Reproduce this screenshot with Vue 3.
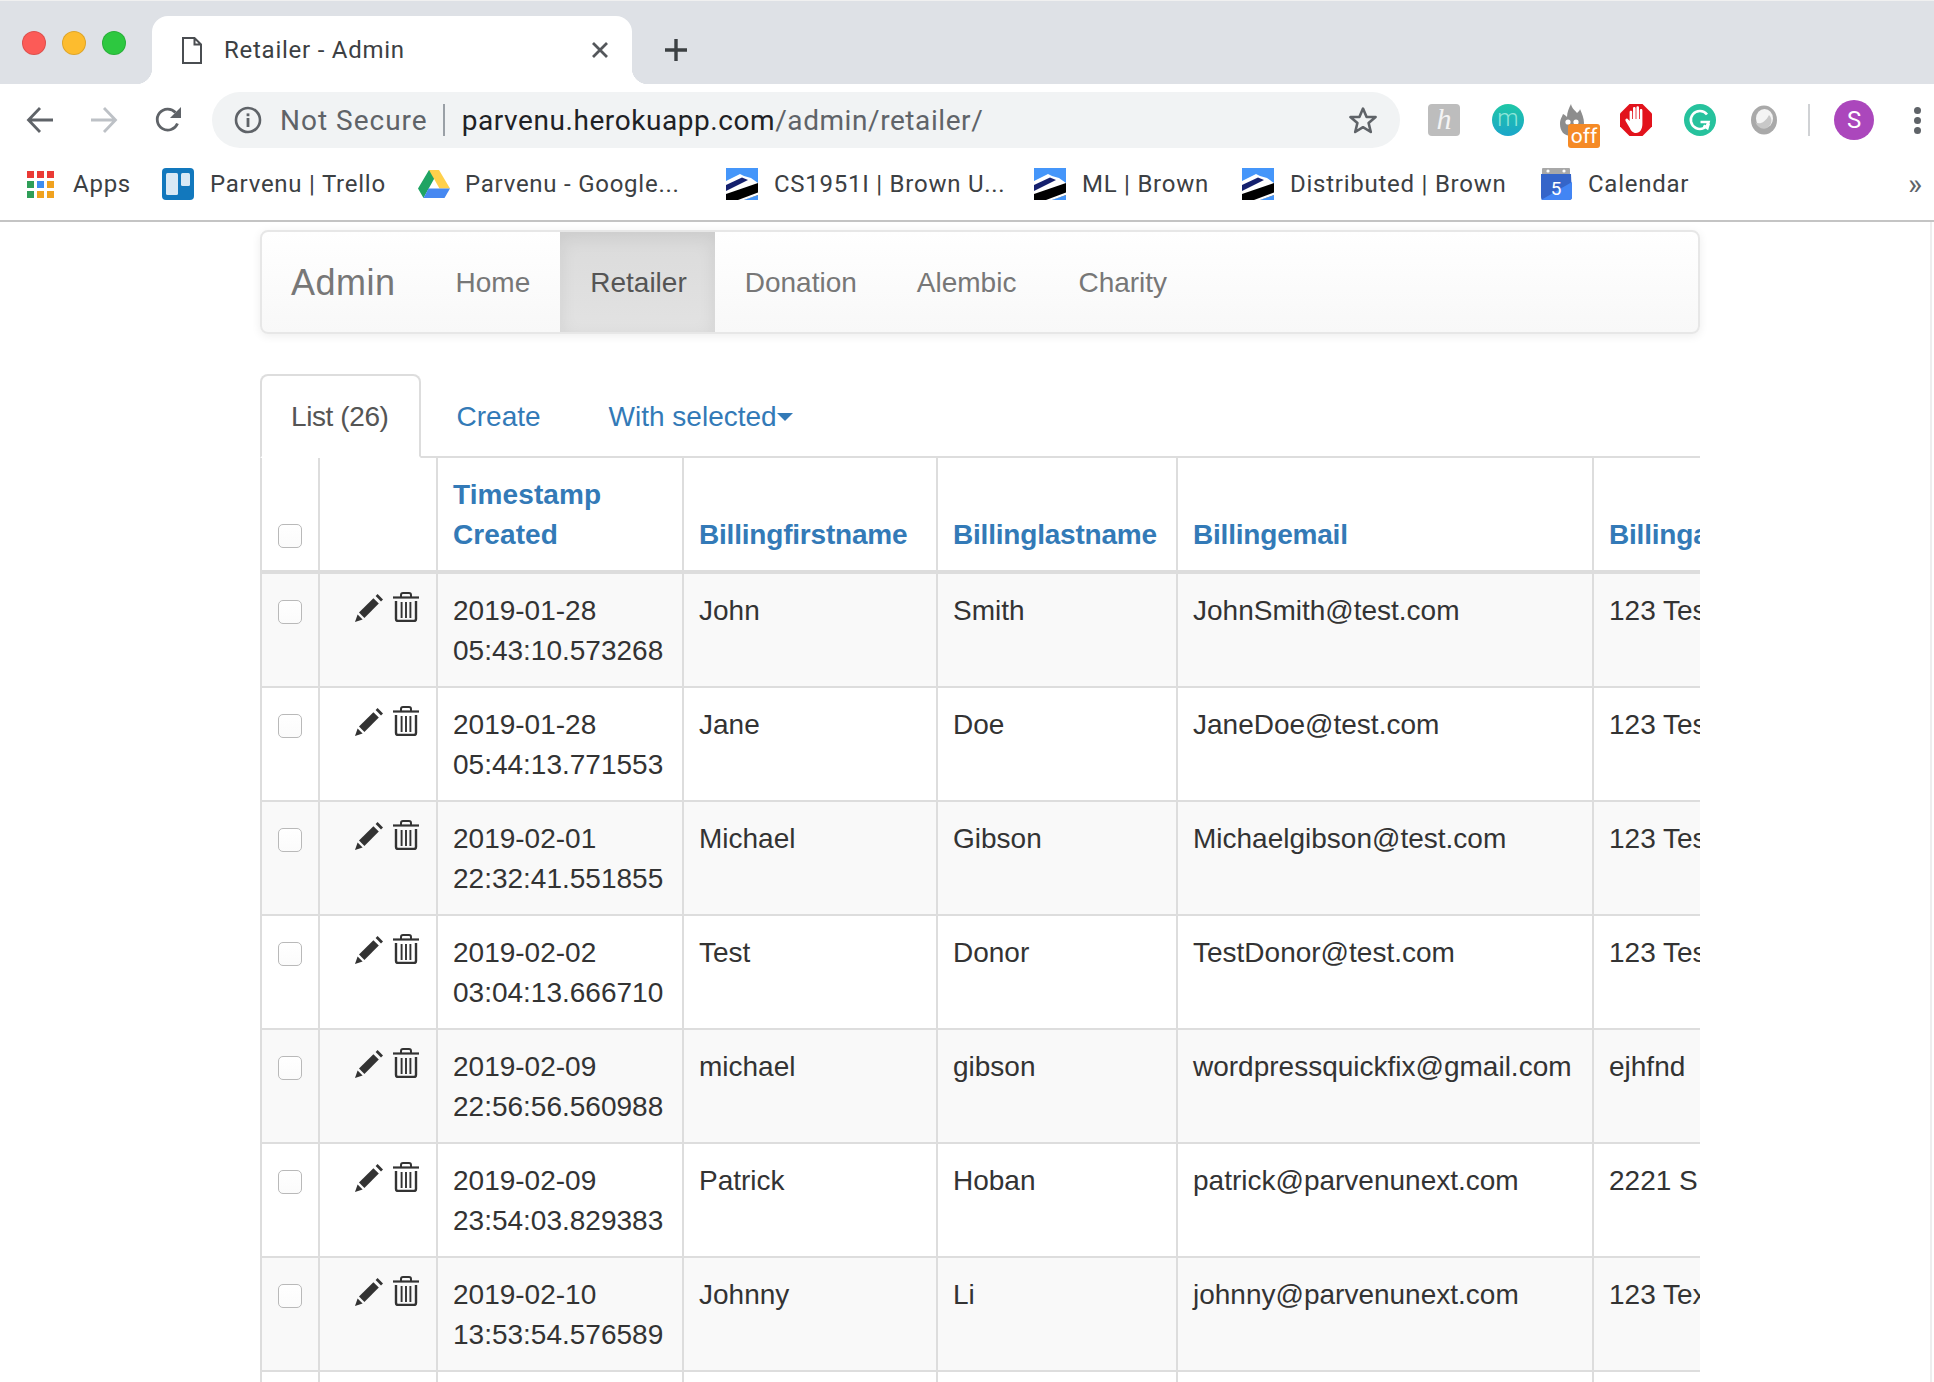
<script setup>
const bookmarks = [
  { label: 'Apps', icon: 'apps', width: 136 },
  { label: 'Parvenu | Trello', icon: 'trello', width: 257 },
  { label: 'Parvenu - Google...', icon: 'drive', width: 307 },
  { label: 'CS1951I | Brown U...', icon: 'brown', width: 308 },
  { label: 'ML | Brown', icon: 'brown', width: 208 },
  { label: 'Distributed | Brown', icon: 'brown', width: 298 },
  { label: 'Calendar', icon: 'calendar', width: 160 }
]

const appColors = ['#ea3a35', '#ea3a35', '#ea3a35', '#2f9e58', '#3f8df0', '#f0a21f', '#2f9e58', '#f0a21f', '#f0a21f']

const navLinks = ['Home', 'Retailer', 'Donation', 'Alembic', 'Charity']

const rows = [
  ['2019-01-28', '05:43:10.573268', 'John', 'Smith', 'JohnSmith@test.com', '123 Test St'],
  ['2019-01-28', '05:44:13.771553', 'Jane', 'Doe', 'JaneDoe@test.com', '123 Test St'],
  ['2019-02-01', '22:32:41.551855', 'Michael', 'Gibson', 'Michaelgibson@test.com', '123 Test St'],
  ['2019-02-02', '03:04:13.666710', 'Test', 'Donor', 'TestDonor@test.com', '123 Test St'],
  ['2019-02-09', '22:56:56.560988', 'michael', 'gibson', 'wordpressquickfix@gmail.com', 'ejhfnd'],
  ['2019-02-09', '23:54:03.829383', 'Patrick', 'Hoban', 'patrick@parvenunext.com', '2221 S Main St'],
  ['2019-02-10', '13:53:54.576589', 'Johnny', 'Li', 'johnny@parvenunext.com', '123 Texas Ave']
]
</script>

<template>
  <div class="page">
    <header class="chrome">
      <div class="tabstrip">
        <div class="lights">
          <span class="light red"></span>
          <span class="light yellow"></span>
          <span class="light green"></span>
        </div>
        <div class="tab">
          <svg class="file-icon" width="20" height="27" viewBox="0 0 20 27">
            <path d="M1 1H12.5L19 7.5V26H1Z M12.5 1V7.5H19" fill="none" stroke="#4a4d51" stroke-width="2" />
          </svg>
          <span class="tab-title">Retailer - Admin</span>
          <svg class="tab-close" width="18" height="18" viewBox="0 0 18 18">
            <path d="M2 2L16 16M16 2L2 16" stroke="#54575b" stroke-width="2.8" />
          </svg>
        </div>
        <svg class="new-tab" width="24" height="24" viewBox="0 0 24 24">
          <path d="M12 1V23M1 12H23" stroke="#3c4043" stroke-width="3.4" />
        </svg>
      </div>

      <div class="toolbar">
        <svg class="nav-icon" width="28" height="28" viewBox="0 0 28 28">
          <path d="M27 14H3M14 2L2.5 14L14 26" fill="none" stroke="#5f6368" stroke-width="2.8" />
        </svg>
        <svg class="nav-icon forward" width="28" height="28" viewBox="0 0 28 28">
          <path d="M1 14H25M14 2L25.5 14L14 26" fill="none" stroke="#bdc1c6" stroke-width="2.8" />
        </svg>
        <svg class="nav-icon reload" width="28" height="28" viewBox="0 0 28 28">
          <path d="M23.5 17.5A10.5 10.5 0 1 1 21.5 6.5" fill="none" stroke="#5f6368" stroke-width="2.8" />
          <path d="M27 1V12H16Z" fill="#5f6368" />
        </svg>
        <div class="omnibox">
          <svg class="info" width="28" height="28" viewBox="0 0 28 28">
            <circle cx="14" cy="14" r="12" fill="none" stroke="#5f6368" stroke-width="2.6" />
            <rect x="12.6" y="12" width="2.8" height="9" fill="#5f6368" />
            <rect x="12.6" y="7.4" width="2.8" height="2.8" fill="#5f6368" />
          </svg>
          <span class="not-secure">Not Secure</span>
          <span class="omni-divider"></span>
          <span class="url">parvenu.herokuapp.com<span class="url-path">/admin/retailer/</span></span>
          <svg class="star" width="30" height="28" viewBox="0 0 30 28">
            <path d="M15 2.6L18.6 11H27.6L20.6 17L22.8 26L15 21.2L7.2 26L9.4 17L2.4 11H11.4Z" fill="none" stroke="#5f6368" stroke-width="2.6" stroke-linejoin="round" />
          </svg>
        </div>
        <div class="extensions">
          <span class="ext ext-h">h</span>
          <span class="ext ext-m">m</span>
          <span class="ext ext-flame">
            <svg width="26" height="32" viewBox="0 0 26 32">
              <path d="M12 0C13 5 16 6 18 9C20 7 21 6 21 5C23 10 25 14 25 19C25 27 19 32 12 32C5 32 1 27 1 20C1 15 3 13 4 10C6 11 7 12 8 13C8 8 10 4 12 0Z" fill="#8d8d8d" />
              <circle cx="9" cy="18" r="2.6" fill="#fff" />
              <circle cx="17" cy="18" r="2.6" fill="#fff" />
            </svg>
            <span class="off-badge">off</span>
          </span>
          <svg class="ext" width="32" height="32" viewBox="0 0 32 32">
            <path d="M9.5 0H22.5L32 9.5V22.5L22.5 32H9.5L0 22.5V9.5Z" fill="#e2131c" />
            <path d="M9.6 17V8C9.6 6.2 12.2 6.2 12.2 8V15H13V4.4C13 2.6 15.6 2.6 15.6 4.4V15H16.4V3.6C16.4 1.8 19 1.8 19 3.6V15H19.8V6.4C19.8 4.6 22.4 4.6 22.4 6.4V20C22.4 25 20 29 16 29C12.6 29 11 26.6 9.8 24L5.6 17C4.6 15 7 13.6 8.2 15.4Z" fill="#fff" />
          </svg>
          <svg class="ext" width="32" height="32" viewBox="0 0 32 32">
            <circle cx="16" cy="16" r="16" fill="#26c29d" />
            <path d="M23 10.5A9 9 0 1 0 24.6 18H16.5" fill="none" stroke="#fff" stroke-width="2.6" />
            <path d="M19.5 21.5L23.5 24.5L25 19.5" fill="none" stroke="#fff" stroke-width="2.2" />
          </svg>
          <svg class="ext-ring" width="28" height="32" viewBox="0 0 28 32">
            <ellipse cx="14" cy="16" rx="13" ry="14.5" fill="#a9a9a9" />
            <ellipse cx="14.5" cy="14.5" rx="8.5" ry="9.5" fill="#f4f4f4" />
            <path d="M5.5 18C9 21 15 19 19 11C23 15 22 21 17 24C12 26 7 23 5.5 18Z" fill="#c8c8c8" />
          </svg>
          <span class="ext-divider"></span>
          <span class="avatar">S</span>
          <span class="dots"><i></i><i></i><i></i></span>
        </div>
      </div>

      <div class="bookmarks">
        <div v-for="b in bookmarks" :key="b.label" class="bookmark" :style="{ width: b.width + 'px' }">
          <span v-if="b.icon === 'apps'" class="apps-grid">
            <i v-for="(c, i) in appColors" :key="i" :style="{ background: c }"></i>
          </span>
          <svg v-else-if="b.icon === 'trello'" class="bm-icon" width="32" height="32" viewBox="0 0 32 32">
            <rect width="32" height="32" rx="4" fill="#1278bd" />
            <rect x="4" y="5" width="12" height="22" rx="1.5" fill="#d9e9f5" />
            <rect x="19" y="5" width="9" height="13" rx="1.5" fill="#d9e9f5" />
          </svg>
          <svg v-else-if="b.icon === 'drive'" class="bm-icon drive" width="32" height="28" viewBox="0 0 32 28">
            <path d="M11 0H21L11 18L5.5 28L0 18.5Z" fill="#1fa463" />
            <path d="M11 0H21L32 18.5H21.5Z" fill="#ffd04b" />
            <path d="M10.5 18.5H32L26.5 28H5.5Z" fill="#4688f1" />
          </svg>
          <svg v-else-if="b.icon === 'brown'" class="bm-icon" width="32" height="32" viewBox="0 0 32 32">
            <rect width="32" height="32" fill="#4596fa" />
            <path d="M0 13L14 6L18 8L25 10L32 15V19L0 32Z" fill="#fff" />
            <path d="M0 17L16 9.5L22 12L0 23Z" fill="#14206e" />
            <path d="M0 26L32 15V27L17 32H0Z" fill="#000" />
            <path d="M12 32L32 24.5V27L18 32Z" fill="#fff" />
          </svg>
          <svg v-else class="bm-icon" width="32" height="32" viewBox="0 0 32 32">
            <rect x="2" y="0" width="28" height="8" rx="1" fill="#a8a8a8" />
            <circle cx="8" cy="3" r="1.6" fill="#fff" />
            <circle cx="24" cy="3" r="1.6" fill="#fff" />
            <path d="M1 6H31L32 29Q32 32 29 32H3Q1 32 1 29Z" fill="#3565c9" />
            <path d="M1 32L32 14V29Q32 32 29 32Z" fill="#4285f4" />
            <text x="16" y="27" text-anchor="middle" font-family="Roboto, sans-serif" font-size="19" fill="#fff">5</text>
          </svg>
          <span class="bm-label">{{ b.label }}</span>
        </div>
        <span class="bm-more">»</span>
      </div>
    </header>

    <main class="content">
      <nav class="navbar">
        <a class="brand">Admin</a>
        <a v-for="link in navLinks" :key="link" class="nav-link" :class="{ active: link === 'Retailer' }">{{ link }}</a>
      </nav>

      <ul class="tabs">
        <li class="tabs-item current">List (26)</li>
        <li class="tabs-item">Create</li>
        <li class="tabs-item">With selected<span class="caret"></span></li>
      </ul>

      <div class="table-wrap">
        <table class="grid">
          <colgroup>
            <col style="width: 58px" />
            <col style="width: 118px" />
            <col style="width: 246px" />
            <col style="width: 254px" />
            <col style="width: 240px" />
            <col style="width: 416px" />
            <col style="width: 400px" />
          </colgroup>
          <thead>
            <tr>
              <th><input type="checkbox" class="check head-check" /></th>
              <th></th>
              <th class="wide-head"><a>Timestamp<br />Created</a></th>
              <th><a>Billingfirstname</a></th>
              <th><a>Billinglastname</a></th>
              <th><a>Billingemail</a></th>
              <th><a>Billingaddress</a></th>
            </tr>
          </thead>
          <tbody>
            <tr v-for="row in rows" :key="row[1]">
              <td><input type="checkbox" class="check" /></td>
              <td>
                <div class="actions">
                  <svg class="pencil" width="28" height="28" viewBox="0 0 28 28">
                    <path d="M0 28L2.6 20.4L7.6 25.4Z" fill="#333" />
                    <path d="M4 18.6L18.4 4.2L23.8 9.6L9.4 24Z" fill="#333" />
                    <path d="M20.6 2L22.6 0L28 5.4L26 7.4Z" fill="#333" />
                  </svg>
                  <svg class="trash" width="26" height="30" viewBox="0 0 26 30">
                    <path d="M0 5.5H26" stroke="#333" stroke-width="2.2" />
                    <path d="M8 5V3Q8 1 10 1H16Q18 1 18 3V5" fill="none" stroke="#333" stroke-width="2" />
                    <path d="M3 9V27Q3 29 5 29H21Q23 29 23 27V9" fill="none" stroke="#333" stroke-width="2.4" />
                    <path d="M8.6 10V26M13 10V26M17.4 10V26" stroke="#333" stroke-width="1.9" />
                  </svg>
                </div>
              </td>
              <td>{{ row[0] }}<br />{{ row[1] }}</td>
              <td>{{ row[2] }}</td>
              <td>{{ row[3] }}</td>
              <td>{{ row[4] }}</td>
              <td class="nowrap">{{ row[5] }}</td>
            </tr>
            <tr class="partial">
              <td></td><td></td><td></td><td></td><td></td><td></td><td></td>
            </tr>
          </tbody>
        </table>
      </div>
    </main>
    <span class="page-edge"></span>
  </div>
</template>

<style>
html, body {
  margin: 0;
  height: 100%;
  overflow: hidden;
  background: #fff;
}
</style>

<style scoped>
.page {
  position: relative;
  width: 1934px;
  height: 1382px;
  overflow: hidden;
  font-family: "Liberation Sans", Arial, sans-serif;
  font-size: 28px;
  line-height: 40px;
  color: #333;
}

.chrome {
  height: 222px;
  box-sizing: border-box;
  border-bottom: 2px solid #c4c4c4;
  font-family: Roboto, "Liberation Sans", sans-serif;
  color: #3c4043;
}

.tabstrip {
  display: flex;
  align-items: flex-start;
  height: 84px;
  box-sizing: border-box;
  padding-top: 1px;
  background: #dee1e6;
  border-top: 1px solid #f0f0f0;
}

.lights {
  display: flex;
  gap: 16px;
  width: 152px;
  box-sizing: border-box;
  padding: 29px 0 0 22px;
}

.light {
  width: 24px;
  height: 24px;
  border-radius: 50%;
  box-sizing: border-box;
  border: 1px solid rgba(0, 0, 0, 0.12);
}

.red { background: #fc5b57; }
.yellow { background: #fdbc2e; }
.green { background: #2dc840; }

.tab {
  position: relative;
  display: flex;
  align-items: center;
  width: 480px;
  height: 68px;
  margin-top: 14px;
  box-sizing: border-box;
  padding: 0 23px 0 30px;
  background: #fff;
  border-radius: 16px 16px 0 0;
}

.tab::before,
.tab::after {
  content: "";
  position: absolute;
  bottom: 0;
  width: 16px;
  height: 16px;
}

.tab::before {
  left: -16px;
  background: radial-gradient(circle at 0 0, #dee1e6 16px, #fff 16.5px);
}

.tab::after {
  right: -16px;
  background: radial-gradient(circle at 100% 0, #dee1e6 16px, #fff 16.5px);
}

.file-icon {
  flex: none;
}

.tab-title {
  margin-left: 22px;
  font-size: 24px;
  line-height: 32px;
  letter-spacing: 0.75px;
}

.tab-close {
  margin-left: auto;
}

.new-tab {
  margin: 36px 0 0 32px;
}

.toolbar {
  display: flex;
  align-items: center;
  height: 76px;
  box-sizing: border-box;
  padding: 8px 0 12px 26px;
}

.nav-icon {
  flex: none;
  width: 28px;
}

.forward {
  margin-left: 36px;
}

.reload {
  margin-left: 36px;
}

.omnibox {
  display: flex;
  align-items: center;
  width: 1188px;
  height: 56px;
  margin-left: 30px;
  box-sizing: border-box;
  padding: 0 22px;
  background: #f1f3f4;
  border-radius: 28px;
}

.not-secure {
  margin-left: 18px;
  padding-top: 2px;
  font-size: 28px;
  color: #5f6368;
  letter-spacing: 1px;
}

.omni-divider {
  width: 2px;
  height: 32px;
  margin: 0 17px 0 15px;
  background: #9aa0a6;
}

.url {
  padding-top: 2px;
  font-size: 28px;
  color: #202124;
  letter-spacing: 0.57px;
}

.url-path {
  color: #5f6368;
}

.star {
  margin-left: auto;
}

.extensions {
  display: flex;
  align-items: center;
  margin-left: 28px;
}

.ext {
  flex: none;
}

.ext-h {
  display: block;
  width: 32px;
  height: 32px;
  border-radius: 4px;
  background: #bdbdbd;
  color: #f4f4f4;
  font: italic 30px/30px "Liberation Serif", serif;
  text-align: center;
}

.ext-m {
  display: block;
  width: 32px;
  height: 32px;
  margin-left: 32px;
  border-radius: 50%;
  background: linear-gradient(#1fc7a6, #1ba6ca);
  color: #8fe6da;
  font: 300 24px/29px Roboto, sans-serif;
  text-align: center;
}

.ext-flame {
  position: relative;
  display: block;
  width: 26px;
  height: 32px;
  margin: 0 35px;
}

.off-badge {
  position: absolute;
  left: 9px;
  top: 20px;
  width: 32px;
  height: 24px;
  border-radius: 3px;
  background: #f58a26;
  color: #fff;
  font-size: 21px;
  line-height: 24px;
  text-align: center;
}

.extensions > svg:nth-of-type(2) {
  margin-left: 32px;
}

.ext-ring {
  margin-left: 34px;
}

.ext-divider {
  width: 2px;
  height: 32px;
  margin-left: 30px;
  background: #d0d2d5;
}

.avatar {
  width: 40px;
  height: 40px;
  margin-left: 24px;
  border-radius: 50%;
  background: #ab47bc;
  color: #fff;
  font-size: 24px;
  line-height: 40px;
  text-align: center;
}

.dots {
  display: flex;
  flex-direction: column;
  gap: 3px;
  margin-left: 40px;
}

.dots i {
  width: 7px;
  height: 7px;
  border-radius: 50%;
  background: #5f6368;
}

.bookmarks {
  display: flex;
  align-items: center;
  height: 60px;
  box-sizing: border-box;
  padding: 0 0 12px 26px;
}

.bookmark {
  display: flex;
  align-items: center;
  flex: none;
}

.bm-icon {
  flex: none;
}

.bm-icon.drive {
  margin: 0 -1px 0 -1px;
}

.bm-label {
  margin-left: 16px;
  font-size: 24px;
  line-height: 32px;
  letter-spacing: 0.75px;
  white-space: nowrap;
}

.apps-grid {
  display: grid;
  grid-template-columns: repeat(3, 7px);
  gap: 3px;
  width: 28px;
  margin: 0 2px 0 1px;
}

.apps-grid i {
  height: 7px;
}

.bm-more {
  margin-left: auto;
  margin-right: 12px;
  font-size: 30px;
  line-height: 32px;
  color: #5f6368;
}

.content {
  width: 1440px;
  margin-left: 260px;
}

.navbar {
  display: flex;
  height: 104px;
  margin-top: 8px;
  box-sizing: border-box;
  border: 2px solid #e7e7e7;
  border-radius: 8px;
  background: linear-gradient(#fff, #f8f8f8);
  box-shadow: inset 0 2px 0 rgba(255, 255, 255, 0.15), 0 2px 10px rgba(0, 0, 0, 0.075);
}

.brand {
  padding: 31px 30px 29px 29px;
  font-size: 36px;
  letter-spacing: 0.5px;
  color: #777;
}

.nav-link {
  padding: 31px 30px 29px;
  color: #777;
}

.nav-link.active {
  padding-right: 28px;
  color: #555;
  background: linear-gradient(#dbdbdb, #e2e2e2);
  box-shadow: inset 0 6px 18px rgba(0, 0, 0, 0.075);
}

.nav-link:last-child {
  margin-left: 2px;
}

.tabs {
  display: flex;
  gap: 4px;
  margin: 40px 0 0;
  padding: 0;
  list-style: none;
  border-bottom: 2px solid #ddd;
}

.tabs-item {
  margin-bottom: -2px;
  padding: 21px 30px 19px;
  border: 2px solid transparent;
  border-radius: 8px 8px 0 0;
  color: #337ab7;
}

.tabs-item.current {
  padding-left: 29px;
  letter-spacing: -0.4px;
  color: #555;
  background: #fff;
  border-color: #ddd #ddd transparent;
}

.caret {
  display: inline-block;
  margin-bottom: 4px;
  vertical-align: middle;
  border-top: 8px solid #337ab7;
  border-left: 8px solid transparent;
  border-right: 8px solid transparent;
}

.table-wrap {
  width: 1440px;
  overflow: hidden;
}

.grid {
  width: 1732px;
  table-layout: fixed;
  border-collapse: collapse;
}

.grid th,
.grid td {
  padding: 17px 16px 15px 15px;
  border: 2px solid #ddd;
  text-align: left;
  vertical-align: top;
}

.grid thead tr th {
  vertical-align: bottom;
  border-top: 0;
  border-bottom-width: 4px;
  font-weight: 700;
  letter-spacing: -0.2px;
}

.grid thead tr th.wide-head {
  letter-spacing: 0.1px;
}

.grid th a {
  color: #337ab7;
}

.grid tbody tr:nth-child(odd) {
  background: #f9f9f9;
}

.grid .partial td {
  height: 80px;
}

.nowrap {
  white-space: nowrap;
}

.check {
  display: block;
  width: 24px;
  height: 24px;
  margin: 9px 0 0 1px;
  appearance: none;
  box-sizing: border-box;
  border: 1.5px solid #b9b9b9;
  border-radius: 5px;
  background: linear-gradient(#fff, #fbfbfb);
}

.head-check {
  margin: 0 0 7px 1px;
}

.actions {
  display: flex;
  justify-content: flex-end;
  align-items: flex-start;
  gap: 10px;
  margin-right: 1px;
}

.pencil {
  margin-top: 3px;
}

.trash {
  margin-top: 1px;
}

.page-edge {
  position: absolute;
  top: 222px;
  right: 2px;
  bottom: 0;
  width: 2px;
  background: #eee;
}
</style>
